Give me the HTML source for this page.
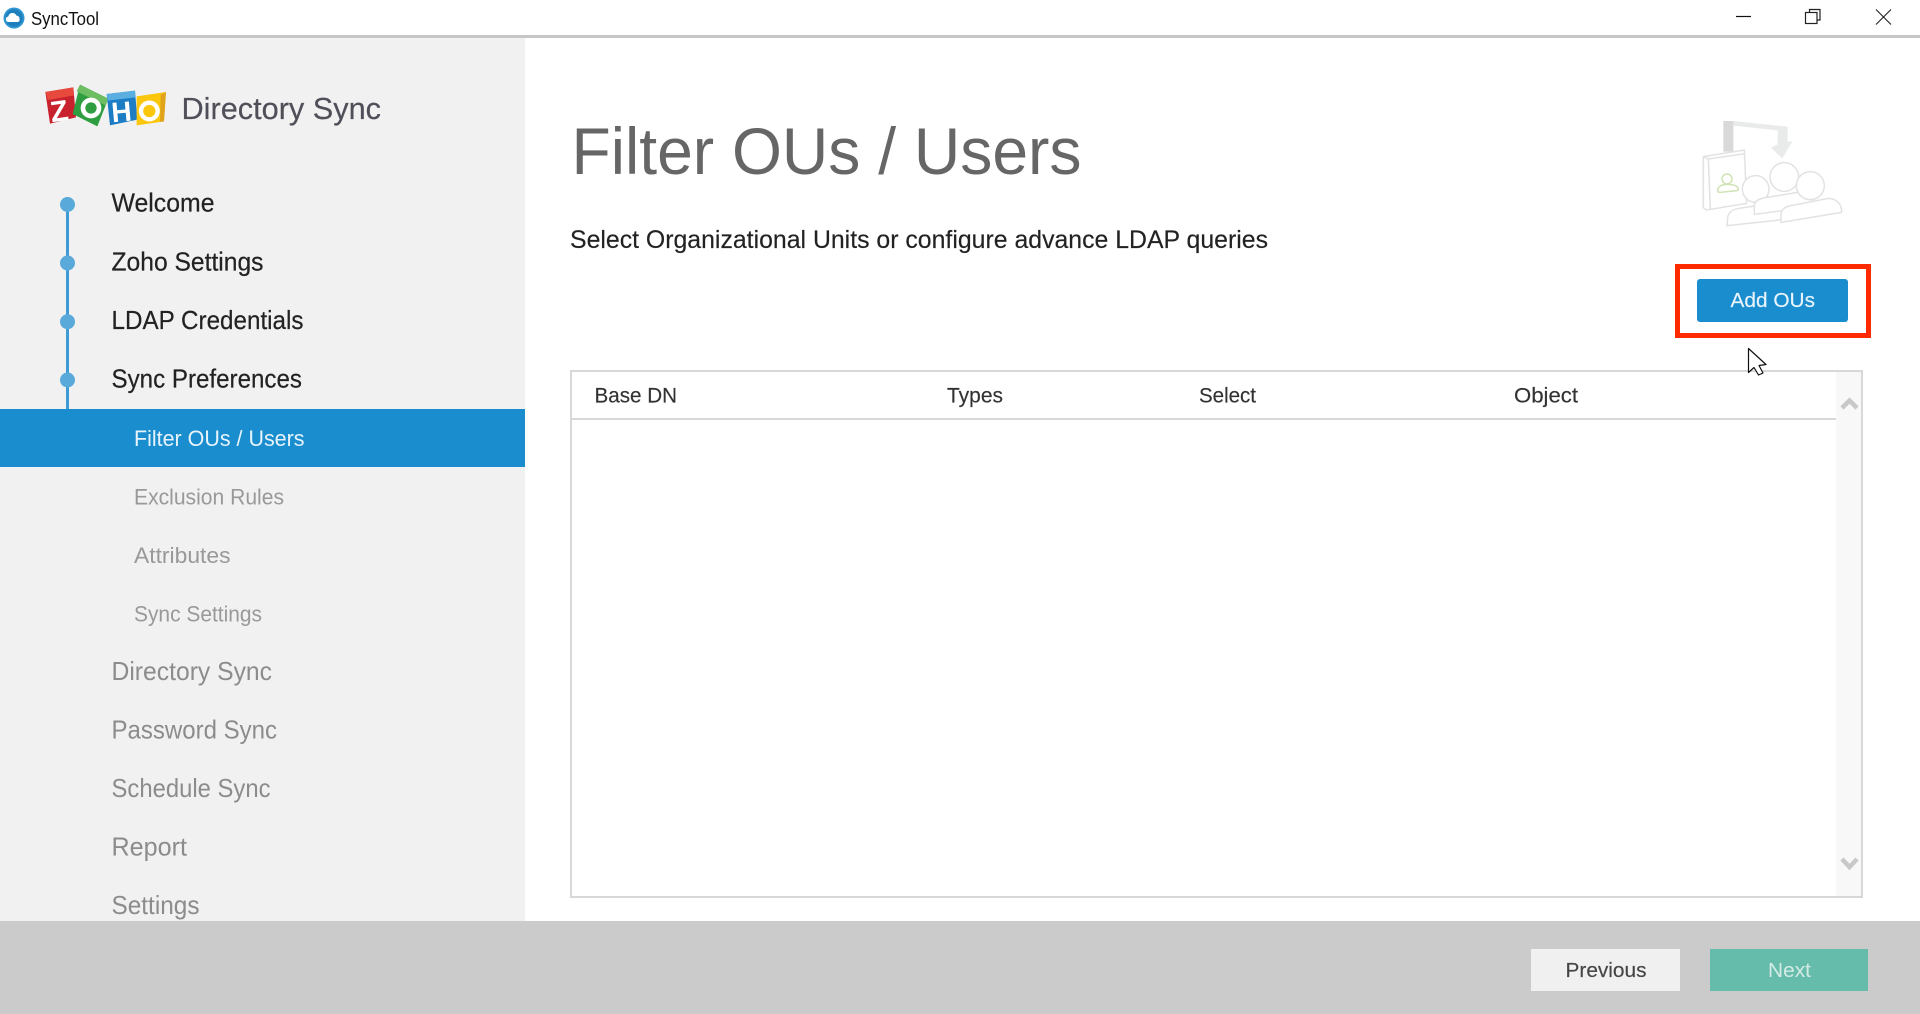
<!DOCTYPE html>
<html lang="en">
<head>
<meta charset="utf-8">
<title>SyncTool</title>
<style>
html,body{margin:0;padding:0;width:1920px;height:1014px;overflow:hidden;background:#fff;font-family:"Liberation Sans",sans-serif}
div{position:absolute;box-sizing:border-box}
#shade{left:0;top:35px;width:1920px;height:3px;background:#c6c6c6}
#side{left:0;top:38px;width:525px;height:883px;background:#f1f1f1}
#band{left:0;top:409px;width:525px;height:58px;background:#1a8dcf}
#foot{left:0;top:921px;width:1920px;height:93px;background:#cbcbcb}
#prev{left:1531px;top:949px;width:149px;height:42px;background:#f0f0f0}
#next{left:1710px;top:949px;width:158px;height:42px;background:#66bcab}
#table{left:570px;top:370px;width:1293px;height:528px;border:2px solid #d8d8d8;background:#fff}
#sb{left:1836px;top:372px;width:25px;height:524px;background:#f8f8f8}
#hl{left:572px;top:418px;width:1264px;height:2px;background:#d8d8d8}
#red{left:1675px;top:264px;width:196px;height:74px;border:5px solid #ff2a00}
#add{left:1697px;top:279px;width:151px;height:43px;background:#1a8dcf;border-radius:3px}
svg{position:absolute;left:0;top:0}
</style>
</head>
<body>
<div id="shade"></div>
<div id="side"></div>
<div id="band"></div>
<div id="foot"></div>
<div id="prev"></div>
<div id="next"></div>
<div id="table"></div>
<div id="sb"></div>
<div id="hl"></div>
<div id="red"></div>
<div id="add"></div>

<svg width="1920" height="1014" viewBox="0 0 1920 1014" xmlns="http://www.w3.org/2000/svg" font-family="'Liberation Sans',sans-serif">
<defs>
<filter id="b1" x="-10%" y="-10%" width="120%" height="120%"><feGaussianBlur stdDeviation="0.6"/></filter>
<filter id="b2" x="-2%" y="-10%" width="104%" height="120%"><feGaussianBlur stdDeviation="0.3"/></filter>
<clipPath id="cp"><rect x="0" y="38" width="525" height="883"/></clipPath>
</defs>

<!-- app icon -->
<circle cx="14" cy="18" r="10.5" fill="#2f96d3"/>
<circle cx="14" cy="18" r="8.6" fill="#1d7fbb"/>
<path d="M8 22a2.8 2.8 0 0 1 .3-5.5 4.2 4.2 0 0 1 8-1 3.2 3.2 0 0 1 3.2 3.2 2.8 2.8 0 0 1-1.5 3.3z" fill="#fff"/>
<text x="31" y="25" font-size="18" fill="#111" textLength="68" lengthAdjust="spacingAndGlyphs">SyncTool</text>

<!-- window controls -->
<path d="M1736 16.5h15" stroke="#111" stroke-width="1.2"/>
<path d="M1809.5 12.5v-3h10.5v10.5h-3" fill="none" stroke="#222" stroke-width="1.2"/>
<rect x="1805.5" y="12.5" width="11.5" height="11" fill="#fff" stroke="#222" stroke-width="1.2"/>
<path d="M1876 9.5l15 15M1891 9.5l-15 15" stroke="#222" stroke-width="1.1"/>

<!-- Zoho logo -->
<g transform="translate(40 78) scale(.3333)" filter="url(#b1)">
  <path d="M16 42L100 28L108 118L30 137Z" fill="#c8202f"/>
  <path d="M16 42L100 28L102 52L24 66Z" fill="#e8483e"/>
  <path d="M120 20L205 62L172 145L98 108Z" fill="#2f9e3f"/>
  <path d="M120 20L205 62L197 82L110 40Z" fill="#6dbd63"/>
  <path d="M200 48L285 38L292 125L210 142Z" fill="#1a7cc4"/>
  <path d="M200 48L285 38L286 58L203 68Z" fill="#5aaee0"/>
  <path d="M290 55L378 42L372 130L290 142Z" fill="#fbc711"/>
  <path d="M362 50L378 42L372 130L360 132Z" fill="#e0a41a"/>
  <text x="31" y="129" font-size="88" font-weight="700" fill="#fff" transform="rotate(-8 60 100)">Z</text>
  <circle cx="153" cy="90" r="24" fill="none" stroke="#fff" stroke-width="14"/>
  <text x="214" y="130" font-size="84" font-weight="700" fill="#fff" transform="rotate(-5 245 100)">H</text>
  <circle cx="328" cy="99" r="25" fill="none" stroke="#fff" stroke-width="13"/>
</g>
<text x="181.5" y="119" font-size="31" fill="#50505a" stroke="#50505a" stroke-width=".2" textLength="199.5" lengthAdjust="spacingAndGlyphs" filter="url(#b2)">Directory Sync</text>

<!-- timeline -->
<rect x="66" y="204" width="3" height="205" fill="#3f9bd5"/>
<circle cx="67.5" cy="204.5" r="7.5" fill="#5aa9db"/>
<circle cx="67.5" cy="263" r="7.5" fill="#5aa9db"/>
<circle cx="67.5" cy="321.7" r="7.5" fill="#5aa9db"/>
<circle cx="67.5" cy="380" r="7.5" fill="#5aa9db"/>

<!-- navigation -->
<g font-size="26" fill="#222" stroke="#222" stroke-width=".2" filter="url(#b2)">
  <text x="111.5" y="211.5" textLength="103" lengthAdjust="spacingAndGlyphs">Welcome</text>
  <text x="111.5" y="270.5" textLength="152" lengthAdjust="spacingAndGlyphs">Zoho Settings</text>
  <text x="111.5" y="329" textLength="192" lengthAdjust="spacingAndGlyphs">LDAP Credentials</text>
  <text x="111.5" y="387.5" textLength="190.5" lengthAdjust="spacingAndGlyphs">Sync Preferences</text>
</g>
<text x="134" y="446" font-size="22" fill="#e6f3fb" textLength="170.5" lengthAdjust="spacingAndGlyphs" filter="url(#b2)">Filter OUs / Users</text>
<g font-size="22" fill="#999" filter="url(#b2)">
  <text x="134" y="504.5" textLength="150" lengthAdjust="spacingAndGlyphs">Exclusion Rules</text>
  <text x="134" y="563" textLength="96.5" lengthAdjust="spacingAndGlyphs">Attributes</text>
  <text x="134" y="621.5" textLength="128" lengthAdjust="spacingAndGlyphs">Sync Settings</text>
</g>
<g clip-path="url(#cp)">
<g font-size="26" fill="#8c8c8c" filter="url(#b2)">
  <text x="111.5" y="680" textLength="160.5" lengthAdjust="spacingAndGlyphs">Directory Sync</text>
  <text x="111.5" y="738.5" textLength="165.5" lengthAdjust="spacingAndGlyphs">Password Sync</text>
  <text x="111.5" y="797" textLength="159" lengthAdjust="spacingAndGlyphs">Schedule Sync</text>
  <text x="111.5" y="855.5" textLength="75.5" lengthAdjust="spacingAndGlyphs">Report</text>
  <text x="111.5" y="914" textLength="88" lengthAdjust="spacingAndGlyphs">Settings</text>
</g>
</g>

<!-- header -->
<text x="571.5" y="174" font-size="66" fill="#666" textLength="510" lengthAdjust="spacingAndGlyphs" filter="url(#b2)">Filter OUs / Users</text>
<text x="570" y="248" font-size="25" fill="#222" stroke="#222" stroke-width=".15" textLength="698" lengthAdjust="spacingAndGlyphs" filter="url(#b2)">Select Organizational Units or configure advance LDAP queries</text>

<!-- illustration -->
<g transform="translate(1695 115) scale(.3333)" fill="none" stroke="#e2e2e2" stroke-width="4.5" filter="url(#b1)">
  <path d="M115 18L278 35V80H292L262 130L228 98L248 88V46L115 32Z" fill="#e9ebea" stroke="none"/>
  <rect x="85" y="18" width="30" height="92" fill="#d9d9d9" stroke="none"/>
  <path d="M25 125L148 105L155 265L35 285L25 278Z" fill="#fff"/>
  <path d="M25 125L40 132L150 116M40 132L46 282"/>
  <circle cx="96" cy="192" r="15" stroke="#cfe3b4"/>
  <path d="M68 226c0-12 14-18 28-18 16 0 30 3 34 12 1 4-1 6-5 7l-50 5c-4 0-7-2-7-6z" stroke="#cfe3b4"/>
  <path d="M96 332l2-24c1-14 14-24 34-28l94-14c26-3 38 12 38 26v22Z" fill="#fff"/>
  <circle cx="182" cy="222" r="40" fill="#fff"/>
  <path d="M178 298V272c0-12 12-20 32-24l98-16c28-3 42 10 42 30v14Z" fill="#fff"/>
  <circle cx="268" cy="186" r="43" fill="#fff"/>
  <path d="M258 322V296c2-14 14-22 34-25l104-20c26-3 44 16 44 38v3Z" fill="#fff"/>
  <circle cx="346" cy="212" r="42" fill="#fff"/>
</g>

<!-- add button -->
<text x="1730.5" y="307" font-size="20.5" fill="#e8f4fb" stroke="#e8f4fb" stroke-width=".15" textLength="84.5" lengthAdjust="spacingAndGlyphs" filter="url(#b2)">Add OUs</text>

<!-- cursor -->
<path d="M1748.5 348.5V372.5L1754 367.5L1758.5 375L1763 373L1759 365.5L1766 364.5Z" fill="#fff" stroke="#111" stroke-width="1.2" stroke-linejoin="round"/>

<!-- table header -->
<g font-size="21" fill="#333" stroke="#333" stroke-width=".15" filter="url(#b2)">
  <text x="594.5" y="402.5" textLength="82.5" lengthAdjust="spacingAndGlyphs">Base DN</text>
  <text x="947" y="402.5" textLength="56" lengthAdjust="spacingAndGlyphs">Types</text>
  <text x="1199" y="402.5" textLength="57" lengthAdjust="spacingAndGlyphs">Select</text>
  <text x="1514" y="402.5" textLength="64" lengthAdjust="spacingAndGlyphs">Object</text>
</g>

<!-- scroll arrows -->
<path d="M1842 408L1849.5 400.5L1857 408" fill="none" stroke="#c8c8c8" stroke-width="4.5"/>
<path d="M1842 859L1849.5 867L1857 859" fill="none" stroke="#c8c8c8" stroke-width="4.5"/>

<!-- footer buttons -->
<text x="1565.5" y="977" font-size="20.5" fill="#444" stroke="#444" stroke-width=".15" textLength="81" lengthAdjust="spacingAndGlyphs" filter="url(#b2)">Previous</text>
<text x="1768" y="977" font-size="20.5" fill="#d3ebe4" textLength="43" lengthAdjust="spacingAndGlyphs" filter="url(#b2)">Next</text>
</svg>
</body>
</html>
